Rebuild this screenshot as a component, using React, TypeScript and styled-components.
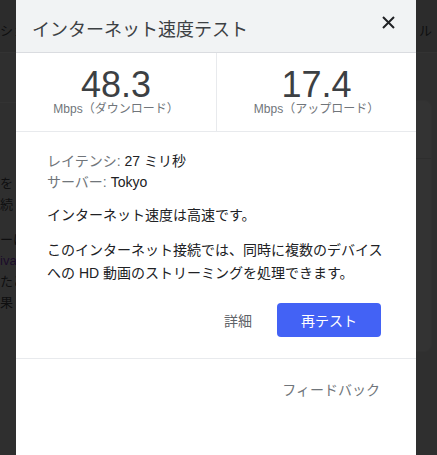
import React from 'react';
import styled, { createGlobalStyle } from 'styled-components';

const GlobalStyle = createGlobalStyle`
  html, body {
    margin: 0;
    height: 100%;
  }

  body {
    font-family: "Liberation Sans", "Noto Sans CJK JP", sans-serif;
    background: #ececec;
    overflow: hidden;
  }

  * {
    box-sizing: border-box;
  }
`;

/* ---------- page underneath the dialog ---------- */

const Page = styled.div`
  height: 455px;
  display: flex;
  flex-direction: column;
  color: #4a4d52;
  font-size: 14px;
`;

const TopBar = styled.header`
  height: 53px;
  padding: 6px 5px 0 0;
  display: flex;
  align-items: center;
  justify-content: space-between;
  background: #dcdcdc;
  border-bottom: 1px solid #ffffff;
`;

const NavLabel = styled.span`
  font-size: 13px;
  white-space: nowrap;
`;

const Content = styled.div`
  display: flex;
  justify-content: space-between;
  padding-right: 5px;
  align-items: flex-start;
`;

const Main = styled.main`
  width: 16px;
  margin-top: 49px;
  padding-top: 70px;
  border-top: 1px solid #ffffff;
  font-size: 13px;
`;

const Para = styled.p`
  margin: 0 0 14px;
  line-height: 21px;
  white-space: nowrap;
`;

const Link = styled.span`
  color: #8a3fd0;
`;

const SideCard = styled.aside`
  width: 190px;
  height: 252px;
  margin-top: 47px;
  background: #ffffff;
  border: 1px solid #f4f4f4;
  border-radius: 8px;
`;

const SideHead = styled.div`
  height: 58px;
  border-bottom: 1px solid #e6e6e6;
`;

/* ---------- speed test dialog ---------- */

const Overlay = styled.div`
  position: fixed;
  inset: 0;
  background: rgba(0, 0, 0, 0.8);
`;

const Dialog = styled.section`
  position: fixed;
  top: 0;
  bottom: 0;
  left: 16px;
  width: 400px;
  background: #ffffff;
  display: flex;
  flex-direction: column;
`;

const Header = styled.div`
  height: 53px;
  padding: 3px 17px 0 16px;
  display: flex;
  align-items: center;
  justify-content: space-between;
  background: #f1f3f4;
  border-bottom: 1px solid #dadce0;
`;

const Title = styled.h2`
  margin: 0;
  font-family: "Noto Sans CJK JP", sans-serif;
  font-size: 18px;
  font-weight: 400;
  line-height: 24px;
  color: #3c4043;
`;

const CloseButton = styled.button`
  display: flex;
  padding: 4px;
  margin-bottom: 11px;
  border: none;
  background: none;
  cursor: pointer;
  color: #202124;
`;

const Stats = styled.div`
  display: grid;
  grid-template-columns: 1fr 1fr;
  border-bottom: 1px solid #e8eaed;
`;

const Stat = styled.div<{ $divided?: boolean }>`
  padding: 14px 0 16px;
  text-align: center;
  border-left: ${props => (props.$divided ? '1px solid #e8eaed' : 'none')};
`;

const Value = styled.div`
  font-family: "Liberation Sans", sans-serif;
  font-size: 36px;
  line-height: 36px;
  color: #3c4043;
`;

const Unit = styled.div`
  font-size: 12px;
  line-height: 12px;
  color: #70757a;
`;

const Body = styled.div`
  padding: 19px 32px 21px 31px;
  font-size: 14px;
  color: #202124;
  border-bottom: 1px solid #e8eaed;
`;

const MetaLine = styled.div`
  line-height: 21px;
`;

const MetaLabel = styled.span`
  color: #70757a;
`;

const Verdict = styled.p`
  margin: 12px 0 0;
  line-height: 21px;
`;

const Note = styled.p`
  margin: 13px 0 0;
  line-height: 23px;
`;

const Actions = styled.div`
  display: flex;
  justify-content: flex-end;
  align-items: center;
  gap: 13px;
  margin-top: 18px;
  padding-right: 3px;
`;

const TextButton = styled.button`
  height: 34px;
  padding: 0 12px;
  border: none;
  background: none;
  font: inherit;
  color: #5f6368;
  cursor: pointer;
`;

const PrimaryButton = styled.button`
  width: 104px;
  height: 34px;
  border: none;
  border-radius: 4px;
  background: #4362f5;
  font: inherit;
  color: #ffffff;
  cursor: pointer;
`;

const Footer = styled.div`
  padding: 21px 36px 0 0;
  text-align: right;
`;

const FeedbackLink = styled.a`
  font-size: 14px;
  line-height: 20px;
  color: #70757a;
  text-decoration: none;
`;

const CloseIcon = () => (
  <svg width="13" height="13" viewBox="0 0 13 13" fill="none">
    <path d="M1 1L12 12M12 1L1 12" stroke="currentColor" strokeWidth="2" />
  </svg>
);

const App = () => {
  return (
    <>
      <GlobalStyle />
      <Page>
        <TopBar>
          <NavLabel>ショ</NavLabel>
          <NavLabel>ル</NavLabel>
        </TopBar>
        <Content>
          <Main>
            <Para>
              を
              <br />
              続
            </Para>
            <Para>
              ーは
              <br />
              <Link>iva</Link>
              <br />
              たど
              <br />
              果
            </Para>
          </Main>
          <SideCard>
            <SideHead />
          </SideCard>
        </Content>
      </Page>

      <Overlay />
      <Dialog>
        <Header>
          <Title>インターネット速度テスト</Title>
          <CloseButton aria-label="閉じる">
            <CloseIcon />
          </CloseButton>
        </Header>

        <Stats>
          <Stat>
            <Value>48.3</Value>
            <Unit>Mbps（ダウンロード）</Unit>
          </Stat>
          <Stat $divided>
            <Value>17.4</Value>
            <Unit>Mbps（アップロード）</Unit>
          </Stat>
        </Stats>

        <Body>
          <MetaLine>
            <MetaLabel>レイテンシ:</MetaLabel> 27 ミリ秒
          </MetaLine>
          <MetaLine>
            <MetaLabel>サーバー:</MetaLabel> Tokyo
          </MetaLine>
          <Verdict>インターネット速度は高速です。</Verdict>
          <Note>
            このインターネット接続では、同時に複数のデバイス
            <br />
            への HD 動画のストリーミングを処理できます。
          </Note>
          <Actions>
            <TextButton>詳細</TextButton>
            <PrimaryButton>再テスト</PrimaryButton>
          </Actions>
        </Body>

        <Footer>
          <FeedbackLink href="#feedback">フィードバック</FeedbackLink>
        </Footer>
      </Dialog>
    </>
  );
};

export default App;
